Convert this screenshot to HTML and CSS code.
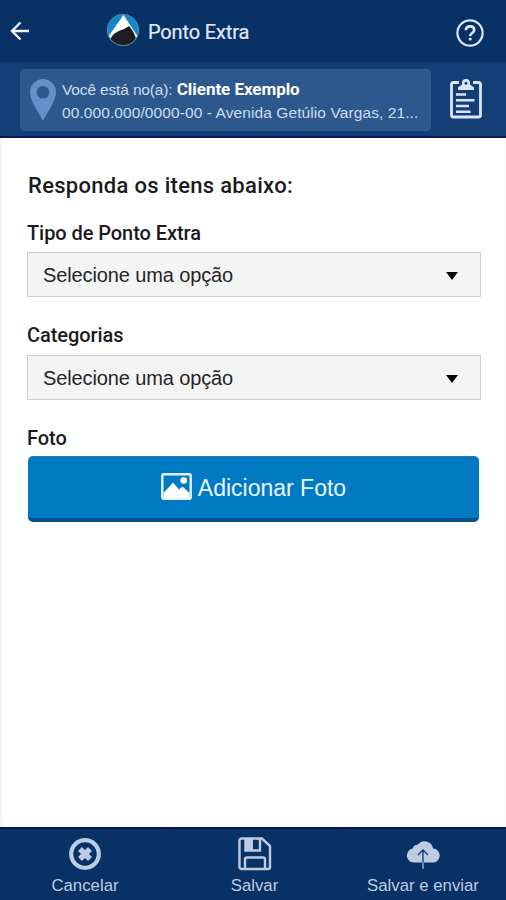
FILE: index.html
```html
<!DOCTYPE html>
<html lang="pt-BR">
<head>
<meta charset="utf-8">
<title>Ponto Extra</title>
<link rel="stylesheet" href="styles.css">
</head>
<body>
<div class="app">
  <header class="topbar">
    <svg class="back" viewBox="0 0 20 20"><path d="M19 10H2M10.500 1.500L2 10l8.500 8.500" fill="none" stroke="#f4f6ff" stroke-width="2.400"/></svg>
    <svg class="logo" viewBox="0 0 34 34">
      <defs><clipPath id="disc"><circle cx="17" cy="17" r="15.500"/></clipPath></defs>
      <circle cx="17" cy="17" r="16" fill="#1686cc"/>
      <g clip-path="url(#disc)">
        <path d="M17.500 2L34 27L17 38L0 27Z" fill="#fff"/>
        <path d="M4 27C6 22 9 19.500 14 17.500Q19 16 23 13Q27 17 30 25Q26 33 17 34Q8 33 4 27Z" fill="#1d1e22"/>
      </g>
      <circle cx="17" cy="17" r="15.700" fill="none" stroke="#6883a0" stroke-width=".8"/>
    </svg>
    <h1 class="title">Ponto Extra</h1>
    <svg class="help" viewBox="0 0 28 28"><circle cx="14" cy="14" r="12.600" fill="none" stroke="#dce5fa" stroke-width="2.200"/><path d="M9.900 11.200c0-2.500 1.700-3.900 4.200-3.900s4.100 1.400 4.100 3.600c0 3-4 3.100-4 6" fill="none" stroke="#dce5fa" stroke-width="2.700"/><circle cx="14.200" cy="20" r="1.600" fill="#dce5fa"/></svg>
  </header>
  <section class="visit">
    <div class="client">
      <svg class="pin" viewBox="0 0 26 42"><path fill-rule="evenodd" d="M13 0A13 13 0 0 0 0 13C0 22 8 32 13 42C18 32 26 22 26 13A13 13 0 0 0 13 0ZM13 7a6.300 6.300 0 1 1 0 12.600a6.300 6.300 0 1 1 0-12.600Z" fill="#6490c7"/></svg>
      <div class="client-text">
        <p class="where"><span class="where-label">Você está no(a):</span> <strong>Cliente Exemplo</strong></p>
        <p class="address">00.000.000/0000-00 - Avenida Getúlio Vargas, 21...</p>
      </div>
    </div>
    <svg class="clipboard" viewBox="0 0 32 40" fill="none" stroke="#dce5fa">
      <path d="M9 3.500H3.500Q1.500 3.500 1.500 5.500V36Q1.500 38 3.500 38H28.500Q30.500 38 30.500 36V5.500Q30.500 3.500 28.500 3.500H23" stroke-width="2.800"/>
      <path d="M6 15.500H16M6 21.300H24.500M6 27H19M6 32.700H20.500" stroke-width="2.500"/>
      <path fill-rule="evenodd" d="M8 11V8.500L12 5.500V4a4 4 0 0 1 8 0v1.500L24 8.500V11ZM16 2.700a1.500 1.500 0 1 0 0 3a1.500 1.500 0 0 0 0-3Z" fill="#dce5fa" stroke="none"/>
    </svg>
  </section>
  <main class="form">
    <h2 class="heading">Responda os itens abaixo:</h2>
    <label class="label tipo">Tipo de Ponto Extra</label>
    <div class="select"><span>Selecione uma opção</span><i class="caret"></i></div>
    <label class="label categorias">Categorias</label>
    <div class="select"><span>Selecione uma opção</span><i class="caret"></i></div>
    <label class="label foto">Foto</label>
    <button class="add">
      <svg class="picture" viewBox="0 0 31 27"><rect x="1.300" y="1.300" width="28.400" height="24.400" rx="1.500" fill="none" stroke="#e5f2ff" stroke-width="2.400"/><path d="M2.500 20L12 9.500L18 16.500L21.500 13.500L28.500 20V25H2.500Z" fill="#fff"/><circle cx="22.700" cy="7.500" r="3.300" fill="#fff"/></svg>
      <span>Adicionar Foto</span>
    </button>
  </main>
  <nav class="bottom">
    <a class="action">
      <svg class="icon" viewBox="0 0 34 34"><circle cx="17" cy="17" r="13.800" fill="none" stroke="#bdcbe3" stroke-width="4.200"/><path d="M12 12l10 10M22 12L12 22" stroke="#bdcbe3" stroke-width="5.600"/></svg>
      <span>Cancelar</span>
    </a>
    <a class="action">
      <svg class="icon" viewBox="0 0 34 34" fill="none" stroke="#bdcbe3" stroke-width="2.400"><path d="M3.500 1.500H24L32 9V30Q32 32 30 32H3.500Q1.500 32 1.500 30V3.500Q1.500 1.500 3.500 1.500Z"/><path d="M7.500 2V13.500H22V2M7 32V22.500Q7 20.500 9 20.500H25Q27 20.500 27 22.500V32"/><path d="M8 2H15V13H8Z" fill="#bdcbe3" stroke="none"/></svg>
      <span>Salvar</span>
    </a>
    <a class="action">
      <svg class="icon" viewBox="0 0 34 34"><path d="M7.500 25.500a7 7 0 0 1-.8-13.900a5 5 0 0 1 5-3.800A8.500 8.500 0 0 1 27 11.500a7 7 0 0 1-.5 14Z" fill="#bdcbe3"/><path d="M17 25.500V13M12 18l5-5 5 5" fill="none" stroke="#0a326b" stroke-width="1.300"/><path d="M17 25.500V32" stroke="#8fa6cc" stroke-width="1.500"/></svg>
      <span>Salvar e enviar</span>
    </a>
  </nav>
</div>
</body>
</html>
```
FILE: styles.css
```css
* { box-sizing: border-box; }
body { margin: 0; font-family: "Liberation Sans", Arial, sans-serif; }
h1, h2, p { margin: 0; }
svg { display: block; flex: none; overflow: visible; }
.app { width: 506px; height: 900px; display: flex; flex-direction: column; background: #fff; overflow: hidden; }
.topbar { flex: none; height: 62px; background: #083165; display: flex; align-items: center; padding: 0 22px 0 10px; }
.back { width: 20px; height: 20px; }
.logo { width: 34px; height: 34px; margin-left: 76px; margin-top: -2px; }
.title { font: 400 20px/24px Roboto, sans-serif; color: #e2eafa; margin: 1px 0 0 8px; letter-spacing: -.15px; white-space: nowrap; -webkit-text-stroke: .2px #e2eafa; }
.help { width: 28px; height: 28px; margin-left: auto; margin-top: 3px; }
.visit { flex: none; height: 76px; background: #143f76; border-bottom: 2px solid #051761; display: flex; padding: 7px 23px 0 20px; }
.client { width: 411px; height: 62px; border-radius: 4px; background: #2c588d; display: flex; padding: 10px 10px 0; }
.pin { width: 26px; height: 42px; }
.client-text { margin-left: 6px; white-space: nowrap; color: #cfdcf0; }
.where { height: 23px; font-size: 15.500px; line-height: 21px; }
.where-label { letter-spacing: -.15px; }
.where strong { font-family: Roboto, sans-serif; font-weight: 700; font-size: 17px; letter-spacing: -.05px; color: #fff; }
.address { font-size: 15.500px; line-height: 22px; letter-spacing: .09px; }
.clipboard { width: 32px; height: 40px; margin-left: auto; margin-right: 1px; margin-top: 10px; }
.form { flex: 1; border-left: 2px solid #f5f5f5; border-right: 1px solid #f5f5f5; padding: 34px 25px 0 25px; display: flex; flex-direction: column; color: #1b1b1d; }
.heading { font: 500 22px/28px Roboto, sans-serif; margin-left: 1px; letter-spacing: .3px; white-space: nowrap; align-self: flex-start; }
.label { font: 500 20px/24px Roboto, sans-serif; letter-spacing: -.07px; white-space: nowrap; align-self: flex-start; }
.tipo { margin: 21px 0 7px; }
.categorias { margin: 26px 0 8px; }
.foto { margin: 26px 0 6px; }
.select { height: 45px; width: 454px; flex: none; border: 1.500px solid #cdcdcd; background: #f4f4f4; display: flex; align-items: center; justify-content: space-between; padding: 0 22px 0 15px; font-size: 20px; letter-spacing: -.12px; line-height: 24px; color: #252527; }
.caret { border: 6.500px solid transparent; border-top: 8px solid #050505; border-bottom: 0; margin-top: 2px; }
.add { width: 451px; height: 66px; flex: none; margin-left: 1px; border: 0; border-top: 1px solid #2d78aa; border-bottom: 4px solid #05528b; border-radius: 5px; background: #007ac3; display: flex; align-items: center; justify-content: center; gap: 6px; padding: 2px 0 0; font-family: inherit; font-size: 23px; color: #e9f4ff; }
.picture { width: 31px; height: 27px; margin-top: -4px; }
.bottom { flex: none; height: 73px; border-top: 2px solid #04165e; background: #083165; display: flex; }
.action { flex: none; width: 168px; border-right: 1px solid #0c2a5c; display: flex; flex-direction: column; align-items: center; padding-top: 8px; color: #bdcbe3; font-size: 16.800px; line-height: 20px; white-space: nowrap; }
.action:first-child { width: 171px; }
.action:last-child { border-right: 0; }
.icon { width: 34px; height: 34px; margin-bottom: 5px; }
```
